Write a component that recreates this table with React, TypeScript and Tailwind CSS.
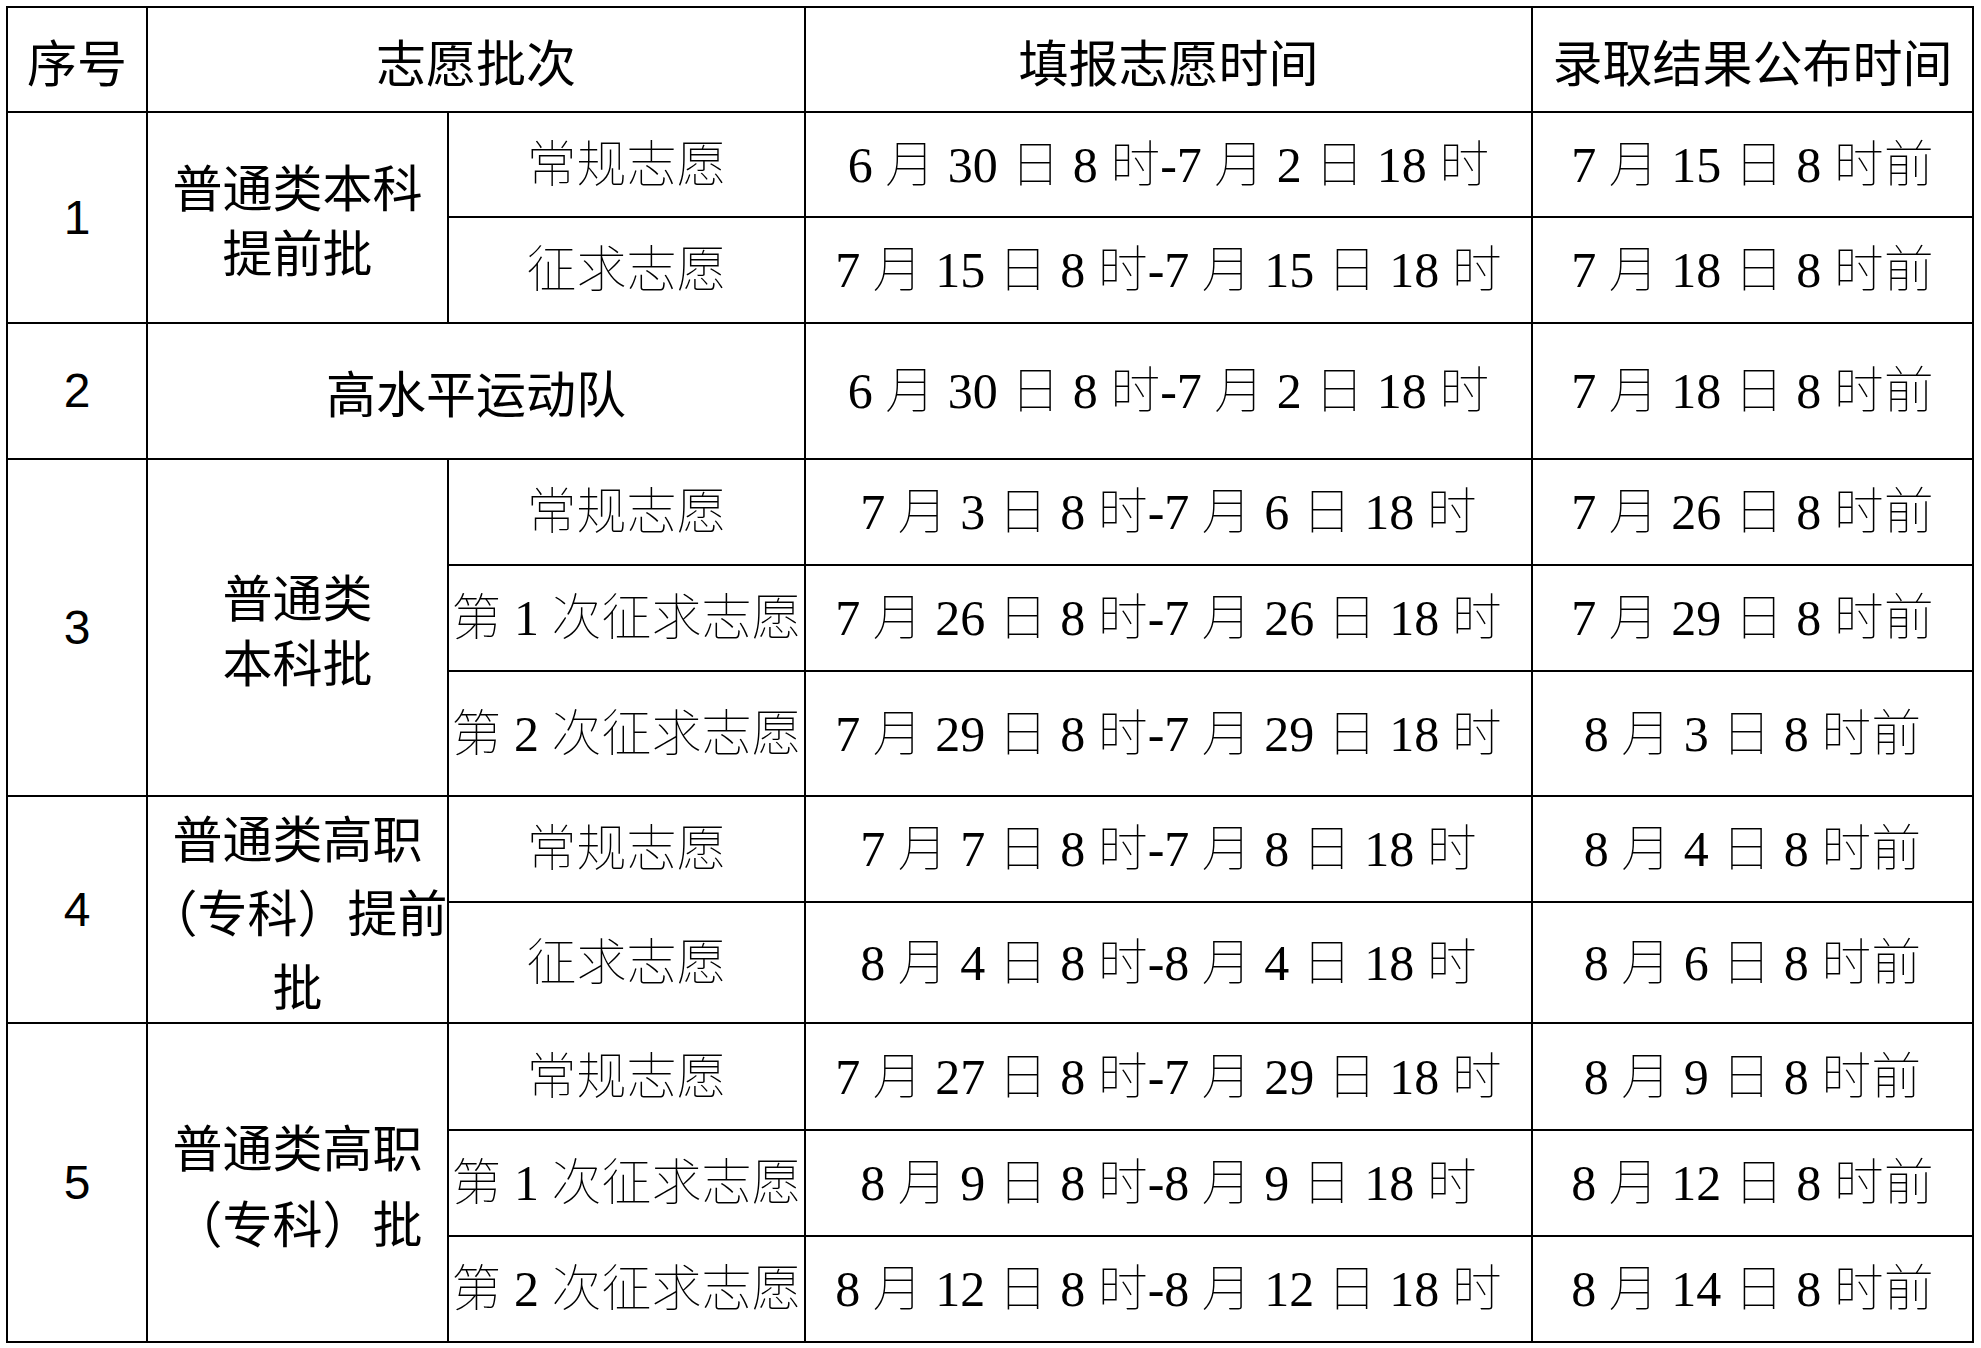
import React from 'react';

type SubRow = { kind: string; fill: string; result: string };

type Group = {
  no: string;
  batch: string[];
  lineHeight: string;
  rows: SubRow[];
};

const sans = 'font-["Noto_Sans_CJK_SC","Noto_Sans",sans-serif]';
const serif = 'font-["Liberation_Serif","Noto_Sans_CJK_SC",serif]';

const groups: Group[] = [
  {
    no: '1',
    batch: ['普通类本科', '提前批'],
    lineHeight: 'leading-[65px]',
    rows: [
      { kind: '常规志愿', fill: '6 月 30 日 8 时-7 月 2 日 18 时', result: '7 月 15 日 8 时前' },
      { kind: '征求志愿', fill: '7 月 15 日 8 时-7 月 15 日 18 时', result: '7 月 18 日 8 时前' },
    ],
  },
  {
    no: '2',
    batch: ['高水平运动队'],
    lineHeight: 'leading-[65px]',
    rows: [{ kind: '', fill: '6 月 30 日 8 时-7 月 2 日 18 时', result: '7 月 18 日 8 时前' }],
  },
  {
    no: '3',
    batch: ['普通类', '本科批'],
    lineHeight: 'leading-[65px]',
    rows: [
      { kind: '常规志愿', fill: '7 月 3 日 8 时-7 月 6 日 18 时', result: '7 月 26 日 8 时前' },
      { kind: '第 1 次征求志愿', fill: '7 月 26 日 8 时-7 月 26 日 18 时', result: '7 月 29 日 8 时前' },
      { kind: '第 2 次征求志愿', fill: '7 月 29 日 8 时-7 月 29 日 18 时', result: '8 月 3 日 8 时前' },
    ],
  },
  {
    no: '4',
    batch: ['普通类高职', '（专科）提前', '批'],
    lineHeight: 'leading-[74px]',
    rows: [
      { kind: '常规志愿', fill: '7 月 7 日 8 时-7 月 8 日 18 时', result: '8 月 4 日 8 时前' },
      { kind: '征求志愿', fill: '8 月 4 日 8 时-8 月 4 日 18 时', result: '8 月 6 日 8 时前' },
    ],
  },
  {
    no: '5',
    batch: ['普通类高职', '（专科）批'],
    lineHeight: 'leading-[76px]',
    rows: [
      { kind: '常规志愿', fill: '7 月 27 日 8 时-7 月 29 日 18 时', result: '8 月 9 日 8 时前' },
      { kind: '第 1 次征求志愿', fill: '8 月 9 日 8 时-8 月 9 日 18 时', result: '8 月 12 日 8 时前' },
      { kind: '第 2 次征求志愿', fill: '8 月 12 日 8 时-8 月 12 日 18 时', result: '8 月 14 日 8 时前' },
    ],
  },
];

const cell = 'flex items-center justify-center bg-white text-black whitespace-nowrap text-center';

function Serif({ children }: { children: React.ReactNode }) {
  return <div className={`${cell} ${serif} font-thin text-[50px] leading-none`}>{children}</div>;
}

function GroupRows({ g }: { g: Group }) {
  const span = g.rows.length;
  const rowSpan = span === 3 ? 'row-span-3' : span === 2 ? 'row-span-2' : '';
  const single = g.rows[0].kind === '';

  return (
    <>
      <div className={`${cell} ${rowSpan} font-["Liberation_Sans",sans-serif] text-[48px] leading-none`}>
        {g.no}
      </div>
      <div
        className={`${cell} ${rowSpan} ${single ? 'col-span-2' : ''} ${sans} text-[50px] ${g.lineHeight}`}
      >
        <div>
          {g.batch.map((line, i) => (
            <div key={i}>{line}</div>
          ))}
        </div>
      </div>
      {g.rows.map((r, i) => (
        <React.Fragment key={i}>
          {!single && <Serif>{r.kind}</Serif>}
          <Serif>{r.fill}</Serif>
          <Serif>{r.result}</Serif>
        </React.Fragment>
      ))}
    </>
  );
}

export default function App() {
  return (
    <div className="min-h-screen w-full bg-white pl-[6px] pt-[6px]">
      <div className="grid w-max gap-[2px] bg-black p-[2px] grid-cols-[138px_299px_355px_725px_439px] grid-rows-[103px_103px_104px_134px_104px_104px_123px_104px_119px_105px_104px_104px]">
        {/* 表头 */}
        <div className={`${cell} ${sans} text-[50px] leading-none`}>序号</div>
        <div className={`${cell} col-span-2 ${sans} text-[50px] leading-none`}>志愿批次</div>
        <div className={`${cell} ${sans} text-[50px] leading-none`}>填报志愿时间</div>
        <div className={`${cell} ${sans} text-[50px] leading-none`}>录取结果公布时间</div>

        {groups.map((g) => (
          <GroupRows key={g.no} g={g} />
        ))}
      </div>
    </div>
  );
}
